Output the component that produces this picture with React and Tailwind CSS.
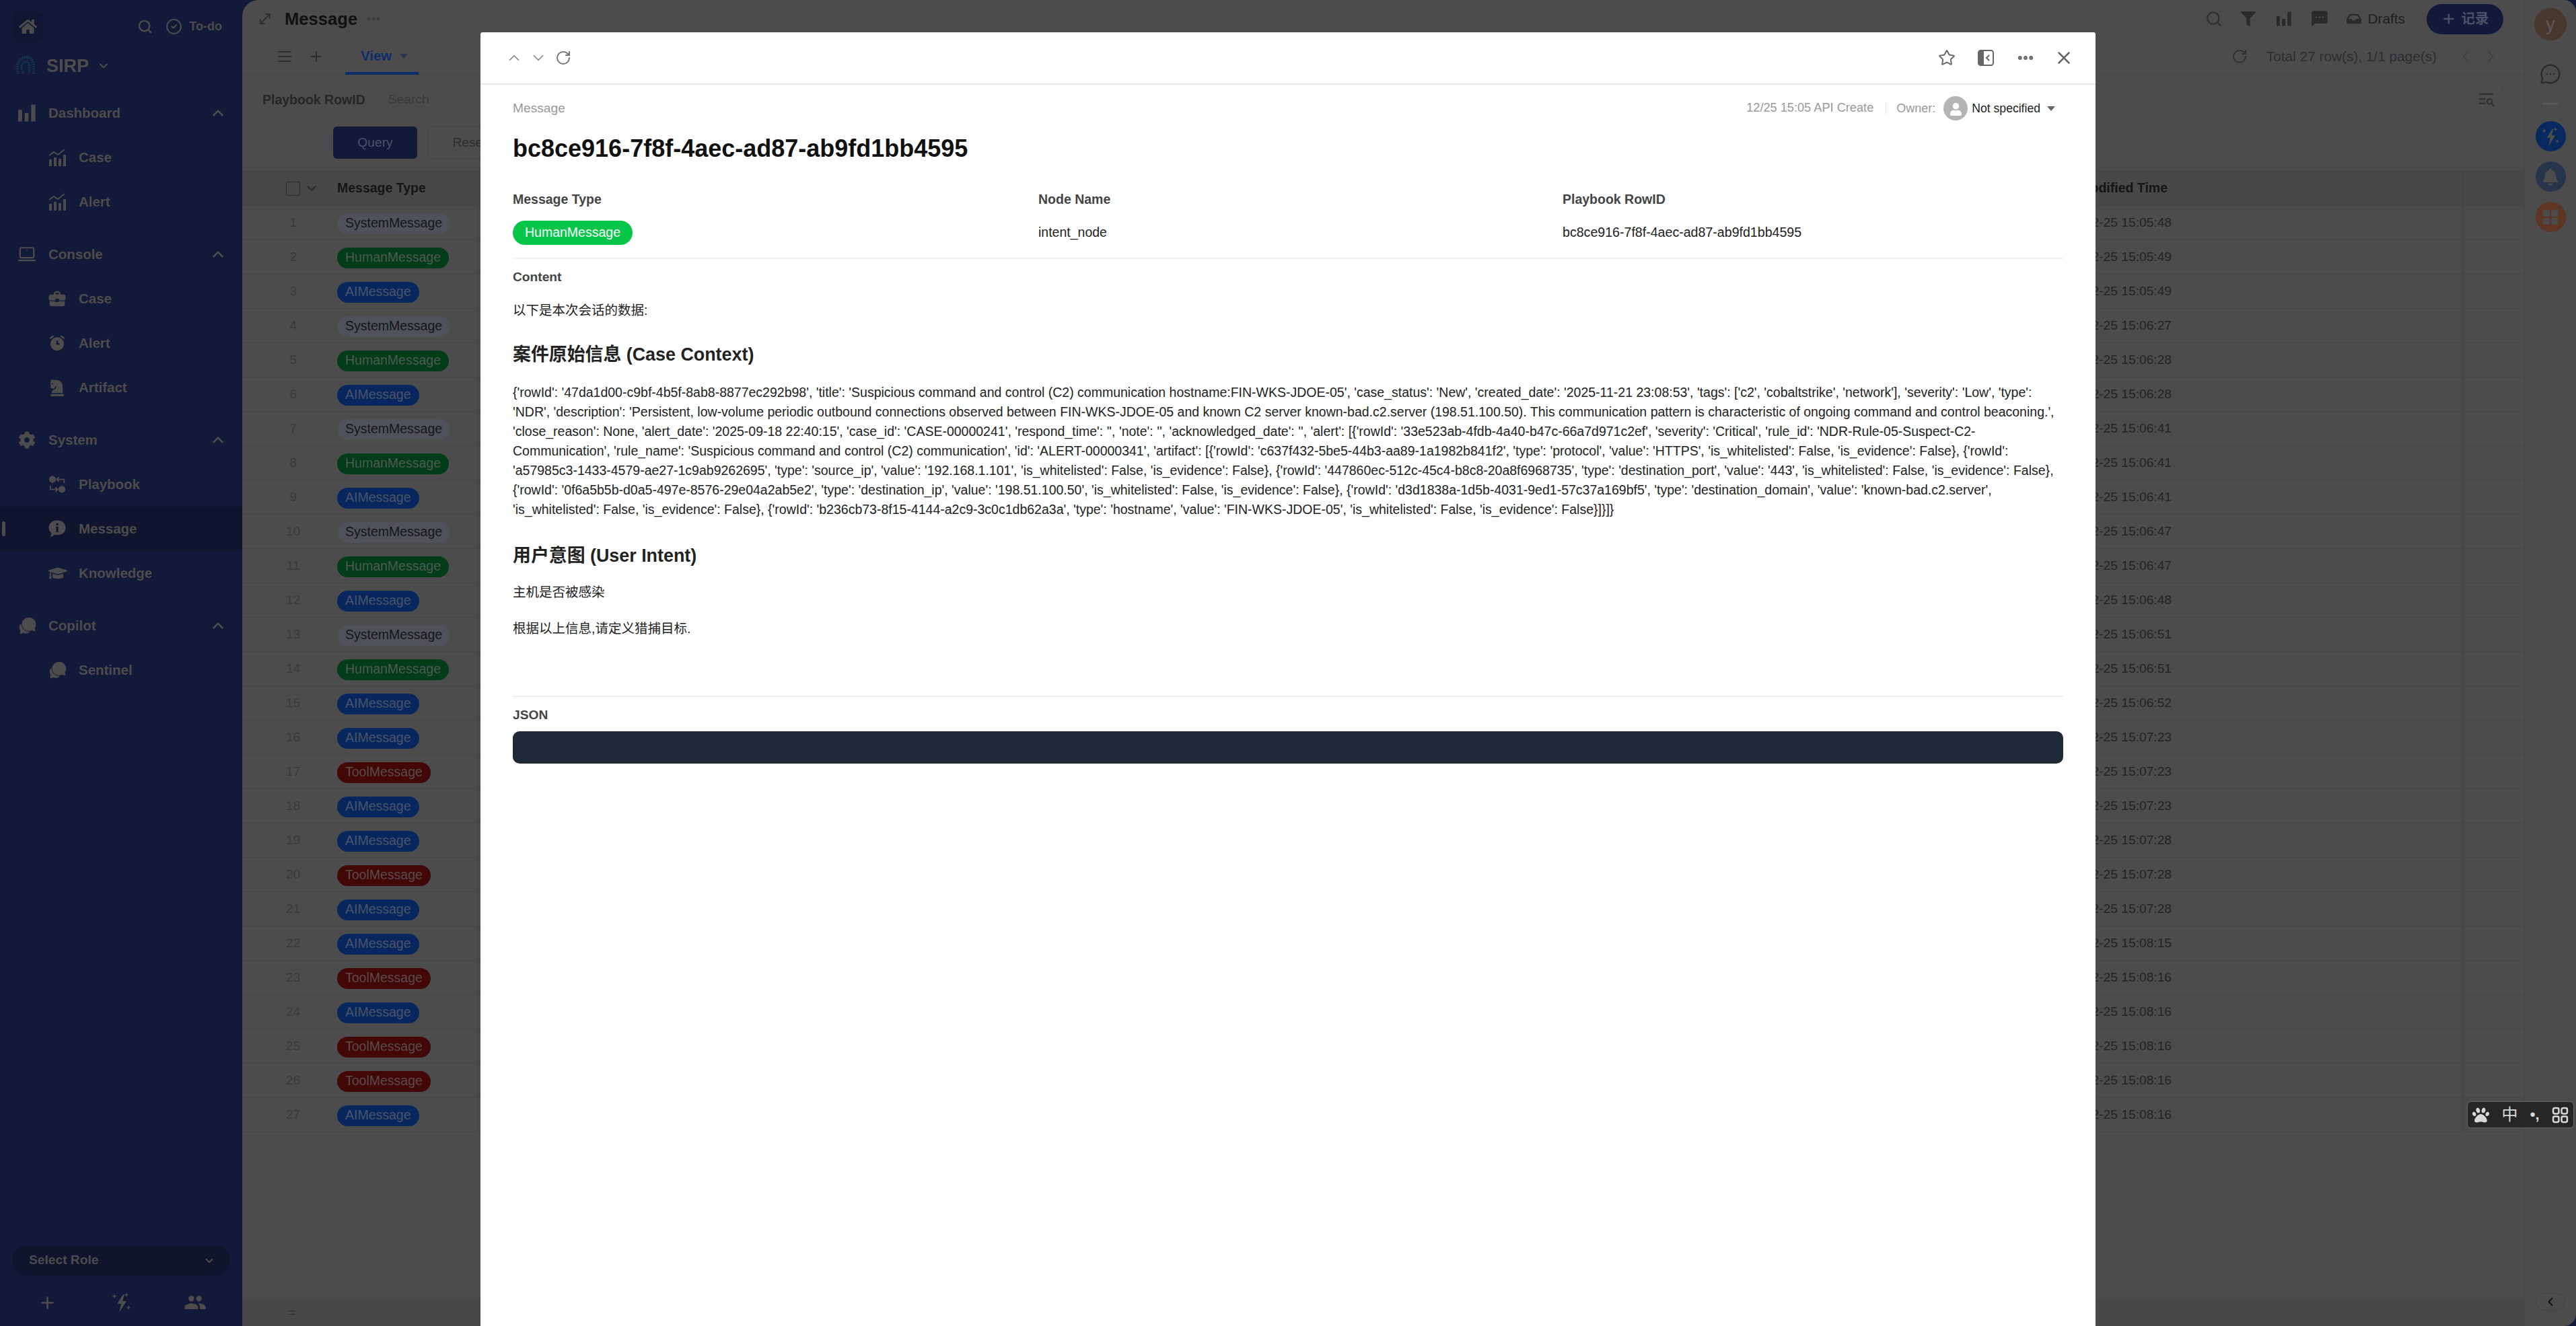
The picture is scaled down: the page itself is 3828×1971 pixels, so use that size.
import React from "react";
import { Search, CircleCheck, ChevronDown, ChevronUp, ChevronLeft, ChevronRight, Plus, RotateCw, Star, X, Ellipsis, MessageCircleMore, MoveDiagonal, AlignJustify } from "lucide-react";
import { FaHome, FaCog, FaChessKnight, FaGraduationCap, FaFilter, FaInbox, FaPaw, FaBell, FaUser } from "react-icons/fa";
import { MdBusinessCenter, MdPeople, MdSms } from "react-icons/md";
import { TbAlarmFilled } from "react-icons/tb";
import { IoChatbubbles } from "react-icons/io5";

const FONT = "font-['Liberation_Sans','Noto_Sans_CJK_SC',sans-serif]";

const BarsIcon = ({ className }) => (
  <svg viewBox="0 0 27 26" className={className} fill="currentColor">
    <rect x="0" y="8" width="6" height="18" />
    <rect x="10" y="13" width="6" height="13" />
    <rect x="20" y="0" width="6.5" height="26" />
  </svg>
);
const ChartIcon = ({ className }) => (
  <svg viewBox="0 0 26 26" className={className} fill="currentColor">
    <rect x="1" y="16" width="4" height="10" />
    <rect x="8" y="13" width="4" height="13" />
    <rect x="15" y="15" width="4" height="11" />
    <rect x="22" y="9" width="4" height="17" />
    <path d="M1 10 L8 5 L14 9 L24 1" fill="none" stroke="currentColor" strokeWidth="2" />
  </svg>
);
const LaptopIcon = ({ className }) => (
  <svg viewBox="0 0 28 24" className={className} fill="none" stroke="currentColor" strokeWidth="2.4">
    <rect x="3" y="1.5" width="22" height="16" rx="1.5" />
    <path d="M0 20.5 H28 V22 a1.5 1.5 0 0 1 -1.5 1 H1.5 a1.5 1.5 0 0 1 -1.5 -1 Z" fill="currentColor" stroke="none" />
    <circle cx="14" cy="5" r="1" fill="currentColor" stroke="none" />
  </svg>
);
const PlaybookIcon = ({ className }) => (
  <svg viewBox="0 0 28 28" className={className} fill="currentColor">
    <circle cx="6.5" cy="6" r="5.5" />
    <circle cx="21.5" cy="22" r="5.5" />
    <path d="M13 6 H25 V12 M13 6 l4 -3.5 M13 6 l4 3.5" fill="none" stroke="currentColor" strokeWidth="2" />
    <path d="M15 22 H3 V16 M15 22 l-4 -3.5 M15 22 l-4 3.5" fill="none" stroke="currentColor" strokeWidth="2" />
  </svg>
);
const InfoBubble = ({ className }) => (
  <svg viewBox="0 0 28 28" className={className}>
    <path d="M14 0.5 C22 0.5 27.5 5.5 27.5 12.5 C27.5 19.5 22 24 14 24 C12.5 24 11 24 9.5 23.5 C7.5 25.5 5 27 2.5 27 C4 25 5 22.5 4.5 20.5 C2 18.5 0.5 15.5 0.5 12.5 C0.5 5.5 6 0.5 14 0.5 Z" fill="currentColor" />
    <rect x="12.4" y="10.5" width="3.4" height="9" fill="#10142f" />
    <circle cx="14.1" cy="6.8" r="2" fill="#10142f" />
  </svg>
);
const SparkBolt = ({ className }) => (
  <svg viewBox="0 0 28 30" className={className} fill="currentColor">
    <path d="M17 3 L8 17 H14 L11 30 L22 13 H16 L19 3 Z" />
    <path d="M4 4 L5.3 7.7 L9 9 L5.3 10.3 L4 14 L2.7 10.3 L-1 9 L2.7 7.7 Z" transform="translate(1 -1) scale(.75)" />
    <path d="M22 0 L23 2.5 L25.5 3.5 L23 4.5 L22 7 L21 4.5 L18.5 3.5 L21 2.5 Z" />
    <path d="M25 19 L26 21.5 L28 22.5 L26 23.5 L25 26 L24 23.5 L22 22.5 L24 21.5 Z" />
  </svg>
);
const PanelIcon = ({ className }) => (
  <svg viewBox="0 0 24 24" className={className}>
    <rect x="1" y="1" width="22" height="22" rx="3.5" fill="none" stroke="currentColor" strokeWidth="2" />
    <path d="M4.5 1 H9 V23 H4.5 a3.5 3.5 0 0 1 -3.5 -3.5 V4.5 A3.5 3.5 0 0 1 4.5 1 Z" fill="currentColor" />
    <path d="M17 8 L13 12 L17 16" fill="none" stroke="currentColor" strokeWidth="2" />
  </svg>
);
const ListSearch = ({ className }) => (
  <svg viewBox="0 0 26 26" className={className} fill="none" stroke="currentColor" strokeWidth="2.4">
    <path d="M1 3 H24 M1 11 H11 M1 18 H11" />
    <circle cx="18" cy="15" r="4" />
    <path d="M21 18 L25 23" />
  </svg>
);
const Logo = ({ className }) => (
  <svg viewBox="0 0 28 30" className={className} fill="none">
    <path d="M4 26 C1 18 1 5 14 3 C24 2 26 10 25 27" stroke="#17324f" strokeWidth="4" strokeDasharray="2 1" />
    <path d="M11 25 C7 20 7 10 15 9 C19 9 19 13 19 25" stroke="#14395c" strokeWidth="3" strokeDasharray="1.5 1" />
  </svg>
);
const QuadIcon = ({ className }) => (
  <svg viewBox="0 0 24 24" className={className} fill="none" stroke="currentColor" strokeWidth="2.4">
    <rect x="2" y="2" width="8" height="8" rx="2" />
    <rect x="14" y="2" width="8" height="8" rx="2" />
    <rect x="2" y="14" width="8" height="8" rx="2" />
    <rect x="14" y="14" width="8" height="8" rx="2" />
  </svg>
);
const WindowIcon = ({ className }) => (
  <svg viewBox="0 0 24 24" className={className} fill="currentColor">
    <rect x="2" y="2" width="9" height="9" rx="2" />
    <rect x="13" y="2" width="9" height="9" rx="2" />
    <rect x="2" y="13" width="9" height="9" rx="2" />
    <rect x="13" y="13" width="9" height="9" rx="2" />
  </svg>
);

const NavGroup = ({ icon, label }) => (
  <div className="mt-3 flex h-[66px] items-center pl-[27px] pr-[23px] first:mt-0">
    <span className="flex w-[45px] shrink-0 items-center">{icon}</span>
    <span className="text-[20.48px] font-bold text-[#4c4c4c]">{label}</span>
    <ChevronUp className="ml-auto h-[26px] w-[26px] text-[#4c4c4c]" strokeWidth={2.4} />
  </div>
);
const NavItem = ({ icon, label, active }) => (
  <div className={`relative flex h-[66px] items-center pl-[72px] ${active ? "bg-[#10142f]" : ""}`}>
    {active && <span className="absolute left-[3px] top-[22px] h-[22px] w-[5px] rounded-full bg-[#4c4c4c]" />}
    <span className="flex w-[45px] shrink-0 items-center">{icon}</span>
    <span className="text-[20.48px] font-bold text-[#4c4c4c]">{label}</span>
  </div>
);

const Sidebar = () => {
  const ic = "h-[26px] w-[26px] text-[#4c4c4c]";
  return (
    <aside className="flex h-full w-[360px] shrink-0 flex-col bg-[#131938]">
      <div className="flex h-[78px] items-center pl-[18px] pr-[30px]">
        <div className="flex h-[47px] w-[47px] items-center justify-center rounded-xl bg-[#111633]">
          <FaHome className="h-[27px] w-[27px] text-[#4c4c4c]" />
        </div>
        <Search className="ml-auto h-[23px] w-[23px] text-[#4c4c4c]" strokeWidth={2.6} />
        <CircleCheck className="ml-[19px] h-[25px] w-[25px] text-[#4c4c4c]" strokeWidth={2} />
        <span className="ml-[10px] text-[18px] font-bold text-[#4c4c4c]">To-do</span>
      </div>
      <div className="flex h-[40px] items-center pl-[23px]">
        <Logo className="h-[32px] w-[30px]" />
        <span className="ml-[16px] text-[27px] font-bold text-[#4c4c4c]">SIRP</span>
        <ChevronDown className="ml-[12px] h-[20px] w-[20px] text-[#4c4c4c]" strokeWidth={2.4} />
      </div>
      <nav className="mt-[17px] flex flex-col">
        <NavGroup icon={<BarsIcon className={ic} />} label="Dashboard" />
        <NavItem icon={<ChartIcon className={ic} />} label="Case" />
        <NavItem icon={<ChartIcon className={ic} />} label="Alert" />
        <NavGroup icon={<LaptopIcon className={ic} />} label="Console" />
        <NavItem icon={<MdBusinessCenter className="-ml-[2px] h-[30px] w-[30px] text-[#4c4c4c]" />} label="Case" />
        <NavItem icon={<TbAlarmFilled className="-ml-[2px] h-[30px] w-[30px] text-[#4c4c4c]" />} label="Alert" />
        <NavItem icon={<FaChessKnight className={ic} />} label="Artifact" />
        <NavGroup icon={<FaCog className={ic} />} label="System" />
        <NavItem icon={<PlaybookIcon className={ic} />} label="Playbook" />
        <NavItem active icon={<InfoBubble className={ic} />} label="Message" />
        <NavItem icon={<FaGraduationCap className="h-[28px] w-[28px] text-[#4c4c4c]" />} label="Knowledge" />
        <NavGroup icon={<IoChatbubbles className="h-[28px] w-[28px] text-[#4c4c4c]" />} label="Copilot" />
        <NavItem icon={<IoChatbubbles className="h-[28px] w-[28px] text-[#4c4c4c]" />} label="Sentinel" />
      </nav>
      <div className="mx-[18px] mt-auto flex h-[45px] items-center rounded-full bg-[#10142d] pl-[25px] pr-[22px]">
        <span className="text-[19.2px] font-bold text-[#4c4c4c]">Select Role</span>
        <ChevronDown className="ml-auto h-[18px] w-[18px] text-[#4c4c4c]" strokeWidth={2.6} />
      </div>
      <div className="mt-[5px] grid h-[70px] grid-cols-3 px-[15px]">
        <div className="flex items-center justify-center"><Plus className="h-[27px] w-[27px] text-[#4c4c4c]" strokeWidth={2.4} /></div>
        <div className="flex items-center justify-center"><SparkBolt className="h-[30px] w-[28px] text-[#4c4c4c]" /></div>
        <div className="flex items-center justify-center"><MdPeople className="h-[34px] w-[34px] text-[#4c4c4c]" /></div>
      </div>
    </aside>
  );
};

const PILL = {
  S: ["SystemMessage", "bg-[#505259] text-[#141619]"],
  H: ["HumanMessage", "bg-[#023c18] text-[#4f5a52]"],
  A: ["AIMessage", "bg-[#08275e] text-[#4a5368]"],
  T: ["ToolMessage", "bg-[#420707] text-[#5a4a4a]"],
};
const ROWS = [
  ["S", "15:05:48"], ["H", "15:05:49"], ["A", "15:05:49"], ["S", "15:06:27"], ["H", "15:06:28"], ["A", "15:06:28"],
  ["S", "15:06:41"], ["H", "15:06:41"], ["A", "15:06:41"], ["S", "15:06:47"], ["H", "15:06:47"], ["A", "15:06:48"],
  ["S", "15:06:51"], ["H", "15:06:51"], ["A", "15:06:52"], ["A", "15:07:23"], ["T", "15:07:23"], ["A", "15:07:23"],
  ["A", "15:07:28"], ["T", "15:07:28"], ["A", "15:07:28"], ["A", "15:08:15"], ["T", "15:08:16"], ["A", "15:08:16"],
  ["T", "15:08:16"], ["T", "15:08:16"], ["A", "15:08:16"],
];

const Main = () => (
  <main className="flex h-full min-w-0 flex-1 flex-col rounded-l-[24px] bg-[#4c4c4c]">
    <div className="flex h-[56px] shrink-0 items-center pl-[22px] pr-[31px]">
      <MoveDiagonal className="h-[24px] w-[24px] text-[#2e2e2e]" strokeWidth={1.8} />
      <span className="ml-[17px] text-[25.6px] font-bold text-[#111111]">Message</span>
      <Ellipsis className="ml-[12px] h-[24px] w-[24px] text-[#3a3a3a]" strokeWidth={3} />
      <div className="ml-auto flex items-center">
        <Search className="h-[26px] w-[26px] text-[#2f2f2f]" strokeWidth={2} />
        <FaFilter className="ml-[26px] h-[22px] w-[24px] text-[#2a2a2a]" />
        <BarsIcon className="ml-[30px] h-[22px] w-[22px] text-[#2a2a2a]" />
        <MdSms className="ml-[28px] h-[28px] w-[28px] text-[#2a2a2a]" />
        <FaInbox className="ml-[26px] h-[22px] w-[22px] text-[#2a2a2a]" />
        <span className="ml-[10px] text-[20.8px] text-[#1f1f1f]">Drafts</span>
        <div className="ml-[32px] flex h-[45px] w-[114px] items-center justify-center gap-[8px] rounded-full bg-[#131938]">
          <Plus className="h-[22px] w-[22px] text-[#4c5068]" strokeWidth={2.6} />
          <span className="text-[20.48px] font-bold text-[#4c5068]">记录</span>
        </div>
      </div>
    </div>
    <div className="flex h-[56px] shrink-0 items-center border-b border-[#474747] pl-[51px] pr-[36px]">
      <AlignJustify className="h-[24px] w-[24px] text-[#2e2e2e]" strokeWidth={2} />
      <Plus className="ml-[23px] h-[24px] w-[24px] text-[#2e2e2e]" strokeWidth={2} />
      <div className="relative ml-[31px] flex h-full w-[109px] items-center gap-[12px] pl-[23px]">
        <span className="text-[20.48px] font-bold text-[#0e2c6b]">View</span>
        <span className="h-0 w-0 border-x-[6px] border-t-[7px] border-x-transparent border-t-[#2b3850]" />
        <span className="absolute bottom-0 left-0 h-[4px] w-full bg-[#0e2c6b]" />
      </div>
      <div className="ml-auto flex items-center">
        <RotateCw className="h-[24px] w-[24px] text-[#2f2f2f]" strokeWidth={2} />
        <span className="ml-[28px] text-[20.8px] text-[#2c2e32]">Total 27 row(s), 1/1 page(s)</span>
        <ChevronLeft className="ml-[29px] h-[28px] w-[28px] text-[#3e404a]" strokeWidth={1.6} />
        <ChevronRight className="ml-[9px] h-[28px] w-[28px] text-[#3e404a]" strokeWidth={1.6} />
      </div>
    </div>
    <div className="flex h-[60px] shrink-0 items-center pl-[30px] pr-[31px] pt-[13px]">
      <span className="text-[19.5px] font-bold text-[#262626]">Playbook RowID</span>
      <div className="ml-[15px] flex h-[47px] flex-1 items-center rounded-md border border-[#464850]">
        <span className="pl-[18px] text-[19.2px] text-[#3a3a3a]">Search</span>
        <div className="ml-auto flex h-full w-[50px] items-center justify-center border-l border-[#464850]">
          <ListSearch className="h-[24px] w-[26px] text-[#2f2f2f]" />
        </div>
      </div>
    </div>
    <div className="mt-[16px] flex shrink-0 gap-[15px] pl-[135px]">
      <div className="flex h-[48px] w-[125px] items-center justify-center rounded-md bg-[#131938] text-[19.2px] text-[#4c5068]">Query</div>
      <div className="flex h-[48px] w-[125px] items-center justify-center rounded-md border border-[#464646] text-[19.2px] text-[#2c2c2c]">Reset</div>
    </div>
    <div className="mt-[18px] flex h-[52px] shrink-0 items-center border-y border-[#464646] bg-[#484848]">
      <div className="flex w-[141px] items-center pl-[65px]">
        <span className="h-[21px] w-[21px] rounded-[3px] border border-[#2c2c2c]" />
        <ChevronDown className="ml-[6px] h-[22px] w-[22px] text-[#2c2c2c]" strokeWidth={2.4} />
      </div>
      <div className="flex h-full w-[209px] items-center border-r border-[#434343] text-[19.5px] font-bold text-[#151515]">Message Type</div>
      <div className="flex-1 pr-[439px] text-right text-[19.5px] font-bold text-[#151515]">Modified Time</div>
      <div className="h-full w-[91px] border-l border-[#434343]" />
    </div>
    {ROWS.map(([k, time], i) => (
      <div key={i} className="flex h-[51px] shrink-0 items-center border-b border-[#464646]">
        <div className="w-[141px] pl-[10px] text-center text-[19.2px] text-[#383a3f]">{i + 1}</div>
        <div className="flex h-full w-[209px] items-center border-r border-[#434343] pt-[2px]">
          <span className={`flex h-[31px] items-center rounded-full px-[12px] text-[19.5px] leading-none ${PILL[k][1]}`}>{PILL[k][0]}</span>
        </div>
        <div className="flex-1 pr-[433px] text-right text-[19.2px] text-[#222428]">2025-12-25 {time}</div>
        <div className="h-full w-[91px] border-l border-[#434343]" />
      </div>
    ))}
    <div className="mt-auto flex h-[41px] shrink-0 items-center border-t border-[#494949] bg-[#484848] pl-[68px] text-[19.2px] text-[#2c2c2c]">=</div>
  </main>
);

const Rail = () => (
  <aside className="flex h-full w-[77px] shrink-0 flex-col items-center rounded-r-[18px] border-l border-[#454545] bg-[#4c4c4c] pt-[12px]">
    <div className="flex h-[48px] w-[48px] items-center justify-center rounded-full bg-[#46382c] text-[28px] text-[#5a5a5a]">y</div>
    <MessageCircleMore className="mt-[34px] h-[32px] w-[32px] text-[#2a2a2a]" strokeWidth={1.8} />
    <span className="mt-[27px] h-[2px] w-[24px] bg-[#5c5c5c]" />
    <div className="mt-[25px] flex h-[45px] w-[45px] items-center justify-center rounded-full bg-[#082860]">
      <SparkBolt className="h-[30px] w-[26px] text-[#4c4c4c]" />
    </div>
    <div className="mt-[15px] flex h-[45px] w-[45px] items-center justify-center rounded-full bg-[#26354c]">
      <FaBell className="h-[26px] w-[26px] text-[#4c4c4c]" />
    </div>
    <div className="mt-[15px] flex h-[45px] w-[45px] items-center justify-center rounded-full bg-[#5e3424]">
      <WindowIcon className="h-[26px] w-[26px] text-[#4c4c4c]" />
    </div>
    <div className="mb-[23px] mt-auto flex h-[26px] w-[44px] items-center justify-center rounded-full border border-[#444]">
      <ChevronLeft className="h-[20px] w-[20px] text-[#111]" strokeWidth={2.4} />
    </div>
  </aside>
);

const Ime = () => (
  <div className="absolute left-[3666px] top-[1637px] flex h-[40px] w-[159px] items-center justify-between rounded-md border border-[#666] bg-[#262626] px-[7px] text-[#d8d8d8]">
    <FaPaw className="h-[25px] w-[25px]" />
    <span className="text-[24px] leading-none">中</span>
    <span className="text-[22px] font-bold leading-none">•,</span>
    <QuadIcon className="h-[25px] w-[25px]" />
  </div>
);

const Modal = () => (
  <section className="absolute bottom-0 left-[714px] top-[48px] flex w-[2400px] flex-col rounded-t-[3px] bg-white">
    <header className="flex h-[78px] shrink-0 items-center border-b-2 border-[#e8e8e8] pl-[37px] pr-[32px]">
      <ChevronUp className="h-[26px] w-[26px] text-[#888]" strokeWidth={1.6} />
      <ChevronDown className="ml-[10px] h-[26px] w-[26px] text-[#888]" strokeWidth={1.6} />
      <RotateCw className="ml-[12px] h-[24px] w-[24px] text-[#777]" strokeWidth={2} />
      <Star className="ml-auto h-[26px] w-[26px] text-[#666]" strokeWidth={1.8} />
      <PanelIcon className="ml-[33px] h-[24px] w-[24px] text-[#666]" />
      <Ellipsis className="ml-[33px] h-[28px] w-[28px] text-[#666]" strokeWidth={3} />
      <X className="ml-[28px] h-[30px] w-[30px] text-[#666]" strokeWidth={2} />
    </header>
    <div className="flex flex-col px-[48px]">
      <div className="mt-[17px] flex h-[36px] items-center">
        <span className="text-[19.2px] text-[#999]">Message</span>
        <span className="ml-auto text-[18.2px] text-[#999]">12/25 15:05 API Create</span>
        <span className="ml-[18px] h-[18px] w-px bg-[#e5e5e5]" />
        <span className="ml-[15px] text-[18px] text-[#999]">Owner:</span>
        <span className="ml-[12px] flex h-[36px] w-[36px] items-end justify-center overflow-hidden rounded-full bg-[#b4b4b4]">
          <FaUser className="mb-[7px] h-[19px] w-[19px] text-white" />
        </span>
        <span className="ml-[6px] text-[17.6px] text-[#222]">Not specified</span>
        <span className="ml-[10px] mr-[12px] h-0 w-0 border-x-[6px] border-t-[7px] border-x-transparent border-t-[#666]" />
      </div>
      <h1 className="mt-[18px] h-[48px] text-[36px] font-bold leading-[48px] text-[#111]">bc8ce916-7f8f-4aec-ad87-ab9fd1bb4595</h1>
      <div className="mt-[37px] grid grid-cols-[781px_779px_1fr]">
        <div className="h-[28px] text-[19.5px] font-bold leading-[28px] text-[#444]">Message Type</div>
        <div className="h-[28px] text-[19.5px] font-bold leading-[28px] text-[#444]">Node Name</div>
        <div className="h-[28px] text-[19.5px] font-bold leading-[28px] text-[#444]">Playbook RowID</div>
        <div className="mt-[18px] flex h-[36px] items-center">
          <span className="flex h-[36px] items-center rounded-full bg-[#06c549] px-[18px] text-[19.5px] leading-none text-white">HumanMessage</span>
        </div>
        <div className="mt-[18px] flex h-[36px] items-center text-[19.5px] text-[#222]">intent_node</div>
        <div className="mt-[18px] flex h-[36px] items-center text-[19.6px] text-[#222]">bc8ce916-7f8f-4aec-ad87-ab9fd1bb4595</div>
      </div>
      <div className="mt-[19px] h-[2px] bg-[#f0f0f0]" />
      <div className="mt-[13px] h-[28px] text-[19.2px] font-bold leading-[28px] text-[#444]">Content</div>
      <p className="mt-[21px] text-[19.5px] leading-[29px] text-[#222]">以下是本次会话的数据:</p>
      <h2 className="mt-[31px] h-[40px] text-[26.88px] font-bold leading-[40px] text-[#222]">案件原始信息 (Case Context)</h2>
      <p className="mt-[22px] text-[19.5px] leading-[29px] text-[#222]">
        {"{'rowId': '47da1d00-c9bf-4b5f-8ab8-8877ec292b98', 'title': 'Suspicious command and control (C2) communication hostname:FIN-WKS-JDOE-05', 'case_status': 'New', 'created_date': '2025-11-21 23:08:53', 'tags': ['c2', 'cobaltstrike', 'network'], 'severity': 'Low', 'type': 'NDR', 'description': 'Persistent, low-volume periodic outbound connections observed between FIN-WKS-JDOE-05 and known C2 server known-bad.c2.server (198.51.100.50). This communication pattern is characteristic of ongoing command and control beaconing.', 'close_reason': None, 'alert_date': '2025-09-18 22:40:15', 'case_id': 'CASE-00000241', 'respond_time': '', 'note': '', 'acknowledged_date': '', 'alert': [{'rowId': '33e523ab-4fdb-4a40-b47c-66a7d971c2ef', 'severity': 'Critical', 'rule_id': 'NDR-Rule-05-Suspect-C2-Communication', 'rule_name': 'Suspicious command and control (C2) communication', 'id': 'ALERT-00000341', 'artifact': [{'rowId': 'c637f432-5be5-44b3-aa89-1a1982b841f2', 'type': 'protocol', 'value': 'HTTPS', 'is_whitelisted': False, 'is_evidence': False}, {'rowId': 'a57985c3-1433-4579-ae27-1c9ab9262695', 'type': 'source_ip', 'value': '192.168.1.101', 'is_whitelisted': False, 'is_evidence': False}, {'rowId': '447860ec-512c-45c4-b8c8-20a8f6968735', 'type': 'destination_port', 'value': '443', 'is_whitelisted': False, 'is_evidence': False}, {'rowId': '0f6a5b5b-d0a5-497e-8576-29e04a2ab5e2', 'type': 'destination_ip', 'value': '198.51.100.50', 'is_whitelisted': False, 'is_evidence': False}, {'rowId': 'd3d1838a-1d5b-4031-9ed1-57c37a169bf5', 'type': 'destination_domain', 'value': 'known-bad.c2.server', 'is_whitelisted': False, 'is_evidence': False}, {'rowId': 'b236cb73-8f15-4144-a2c9-3c0c1db62a3a', 'type': 'hostname', 'value': 'FIN-WKS-JDOE-05', 'is_whitelisted': False, 'is_evidence': False}]}]}"}
      </p>
      <h2 className="mt-[34px] h-[40px] text-[26.88px] font-bold leading-[40px] text-[#222]">用户意图 (User Intent)</h2>
      <p className="mt-[20px] text-[19.5px] leading-[29px] text-[#222]">主机是否被感染</p>
      <p className="mt-[25px] text-[19.5px] leading-[29px] text-[#222]">根据以上信息,请定义猎捕目标.</p>
      <div className="mt-[85px] h-[2px] bg-[#f0f0f0]" />
      <div className="mt-[13px] h-[28px] text-[19.2px] font-bold leading-[28px] text-[#444]">JSON</div>
      <div className="mt-[10px] h-[48px] rounded-[10px] bg-[#1f2937]" />
    </div>
  </section>
);

export default function App() {
  return (
    <div className={`relative flex h-[1971px] w-[3828px] overflow-hidden bg-[#131938] ${FONT}`}>
      <Sidebar />
      <Main />
      <Rail />
      <Modal />
      <Ime />
    </div>
  );
}
